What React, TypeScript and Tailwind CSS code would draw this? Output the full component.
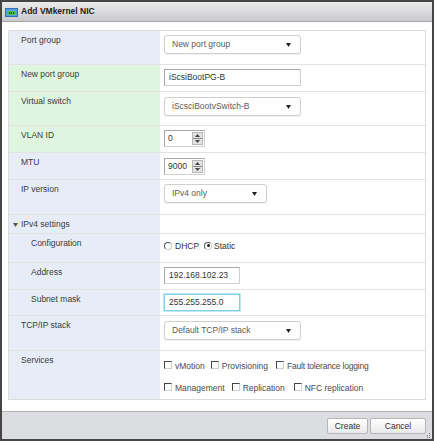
import React from "react";

const font = { fontFamily: '"Liberation Sans", Arial, sans-serif' };

function Arrow() {
  return (
    <svg width="5" height="4" viewBox="0 0 5 4" className="shrink-0">
      <path d="M0 0 L5 0 L2.5 4 Z" fill="#222" />
    </svg>
  );
}

function Select({ text, w }: { text: string; w: string }) {
  return (
    <div
      className={`${w} h-[19px] flex items-center justify-between pl-[7px] pr-[9px] bg-white border border-[#cfcfcf] rounded-[3px] shadow-[0_1px_1px_rgba(0,0,0,0.06)] text-[#5a5a5a]`}
    >
      <span>{text}</span>
      <Arrow />
    </div>
  );
}

function TextBox({ text, w, focus }: { text: string; w: string; focus?: boolean }) {
  return (
    <div
      className={`${w} h-[17px] flex items-center pl-[4px] bg-white text-[#333] ${
        focus
          ? "border border-[#7fd0e6] shadow-[0_0_0_1px_#bfe9f4]"
          : "border border-[#a8a8a8] border-b-[#d0d0d0] border-r-[#d0d0d0]"
      }`}
    >
      {text}
    </div>
  );
}

function Spinner({ text }: { text: string }) {
  return (
    <div className="w-[41px] h-[17px] flex bg-white border border-[#a8a8a8] border-b-[#d0d0d0] border-r-[#d0d0d0]">
      <div className="flex-1 flex items-center pl-[3px] text-[#333]">{text}</div>
      <div className="w-[11px] my-[1px] mr-[1px] flex flex-col bg-[#e2e2e2] border border-[#b8b8b8]">
        <div className="flex-1 flex items-center justify-center border-b border-[#8a8a8a]">
          <svg width="5" height="3" viewBox="0 0 5 3">
            <path d="M0 3 L2.5 0 L5 3 Z" fill="#444" />
          </svg>
        </div>
        <div className="flex-1 flex items-center justify-center">
          <svg width="5" height="3" viewBox="0 0 5 3">
            <path d="M0 0 L5 0 L2.5 3 Z" fill="#444" />
          </svg>
        </div>
      </div>
    </div>
  );
}

function Radio({ checked }: { checked?: boolean }) {
  return (
    <span className="relative inline-flex w-[8px] h-[8px] rounded-full border border-[#555] border-b-[#ccc] border-r-[#ccc] bg-white items-center justify-center -translate-y-[1px]">
      {checked && <span className="w-[3px] h-[3px] rounded-full bg-[#222]" />}
    </span>
  );
}

function Check() {
  return (
    <span className="inline-block w-[8px] h-[8px] border border-[#444] border-b-[#cfcfcf] border-r-[#cfcfcf] bg-white -translate-y-[1px]" />
  );
}

function Row({
  h,
  label,
  bg = "bg-[#e7edf7]",
  indent = false,
  children,
  last = false,
  pt = "pt-[4px]",
}: {
  h: string;
  label: React.ReactNode;
  bg?: string;
  indent?: boolean;
  children?: React.ReactNode;
  last?: boolean;
  pt?: string;
}) {
  return (
    <div className={`grid grid-cols-[151px_1fr] ${h} ${last ? "" : "border-b border-[#e2e2e2]"}`}>
      <div className={`${bg} ${indent ? "pl-[22px]" : "pl-[12px]"} pt-[4px] leading-[11px] text-[#3a3a3a]`}>
        {label}
      </div>
      <div className={`bg-white pl-[4px] ${pt}`}>{children}</div>
    </div>
  );
}

const green = "bg-[#e0f5e0]";

export default function App() {
  return (
    <div
      style={font}
      className="w-[434px] h-[441px] border-2 border-[#454545] bg-white flex flex-col text-[8.5px] overflow-hidden"
    >
      {/* Title bar */}
      <div className="h-[20px] shrink-0 flex items-center pl-[3px] gap-[3px] bg-gradient-to-b from-[#ececec] to-[#c9cacd] border-b border-[#a6a6a6]">
        <svg width="13" height="9" viewBox="0 0 13 9" className="shrink-0 translate-y-[1px]">
          <rect x="0" y="0" width="13" height="9" fill="#2f6fbf" />
          <rect x="1" y="1" width="11" height="7" fill="#5b9be0" />
          <rect x="3" y="3" width="8" height="4" fill="#49c24a" />
          <rect x="4" y="4" width="1" height="2" fill="#1d5a1d" />
          <rect x="6" y="4" width="1" height="2" fill="#1d5a1d" />
          <rect x="8" y="4" width="1" height="2" fill="#1d5a1d" />
        </svg>
        <span className="font-bold text-[8.5px] text-[#1e1e1e]">Add VMkernel NIC</span>
      </div>

      {/* Content */}
      <div className="flex-1 px-[6px] pt-[8px]">
        <div className="border border-[#dcdcdc]">
          <Row h="h-[34px]" label="Port group">
            <Select text="New port group" w="w-[137px]" />
          </Row>
          <Row h="h-[27px]" label="New port group" bg={green}>
            <TextBox text="iScsiBootPG-B" w="w-[137px]" />
          </Row>
          <Row h="h-[34px]" label="Virtual switch" bg={green} pt="pt-[5px]">
            <Select text="iScsciBootvSwitch-B" w="w-[137px]" />
          </Row>
          <Row h="h-[27px]" label="VLAN ID" bg={green}>
            <Spinner text="0" />
          </Row>
          <Row h="h-[27px]" label="MTU" pt="pt-[5px]">
            <Spinner text="9000" />
          </Row>
          <Row h="h-[35px]" label="IP version">
            <Select text="IPv4 only" w="w-[103px]" />
          </Row>
          <Row
            h="h-[19px]"
            label={
              <span className="flex items-center -ml-[8px] gap-[3px]">
                <svg width="5" height="4" viewBox="0 0 5 4">
                  <path d="M0 0 L5 0 L2.5 4 Z" fill="#555" />
                </svg>
                <span>IPv4 settings</span>
              </span>
            }
          />
          <Row h="h-[29px]" label="Configuration" indent pt="pt-[7px]">
            <div className="flex items-center text-[#333] leading-[11px]">
              <Radio />
              <span className="ml-[3px]">DHCP</span>
              <span className="ml-[5px] flex items-center">
                <Radio checked />
              </span>
              <span className="ml-[2px]">Static</span>
            </div>
          </Row>
          <Row h="h-[27px]" label="Address" indent>
            <TextBox text="192.168.102.23" w="w-[76px]" />
          </Row>
          <Row h="h-[26px]" label="Subnet mask" indent>
            <TextBox text="255.255.255.0" w="w-[76px]" focus />
          </Row>
          <Row h="h-[35px]" label="TCP/IP stack" pt="pt-[5px]">
            <Select text="Default TCP/IP stack" w="w-[137px]" />
          </Row>
          <Row h="h-[48px]" label="Services" last pt="pt-[9px]">
            <div className="flex flex-col gap-[10px] text-[#4a4a4a] leading-[12px]">
              <div className="flex items-center">
                <Check />
                <span className="ml-[3px]">vMotion</span>
                <span className="ml-[6px] flex items-center"><Check /></span>
                <span className="ml-[3px]">Provisioning</span>
                <span className="ml-[8px] flex items-center"><Check /></span>
                <span className="ml-[3px] tracking-[-0.2px]">Fault tolerance logging</span>
              </div>
              <div className="flex items-center">
                <Check />
                <span className="ml-[3px]">Management</span>
                <span className="ml-[7px] flex items-center"><Check /></span>
                <span className="ml-[3px]">Replication</span>
                <span className="ml-[9px] flex items-center"><Check /></span>
                <span className="ml-[3px]">NFC replication</span>
              </div>
            </div>
          </Row>
        </div>
      </div>

      {/* Bottom bar */}
      <div className="relative h-[28px] shrink-0 bg-[#dcdde0] border-t border-[#b3b3b3] flex justify-end items-start pt-[6px] pr-[6px] gap-[2px]">
        <button
          style={font}
          className="w-[41px] h-[16px] rounded-[2px] border border-[#b5b5b5] bg-gradient-to-b from-[#ffffff] to-[#e9e9e9] text-[8.5px] text-[#333] flex items-center justify-center"
        >
          Create
        </button>
        <button
          style={font}
          className="w-[56px] h-[16px] rounded-[2px] border border-[#b5b5b5] bg-gradient-to-b from-[#ffffff] to-[#e9e9e9] text-[8.5px] text-[#333] flex items-center justify-center"
        >
          Cancel
        </button>
        <svg width="5" height="5" viewBox="0 0 5 5" className="absolute right-[1px] bottom-[1px]">
          <rect x="3" y="0" width="1" height="1" fill="#777" />
          <rect x="1" y="2" width="1" height="1" fill="#777" />
          <rect x="3" y="2" width="1" height="1" fill="#777" />
          <rect x="3" y="4" width="1" height="1" fill="#777" />
          <rect x="1" y="4" width="1" height="1" fill="#777" />
        </svg>
      </div>
    </div>
  );
}
